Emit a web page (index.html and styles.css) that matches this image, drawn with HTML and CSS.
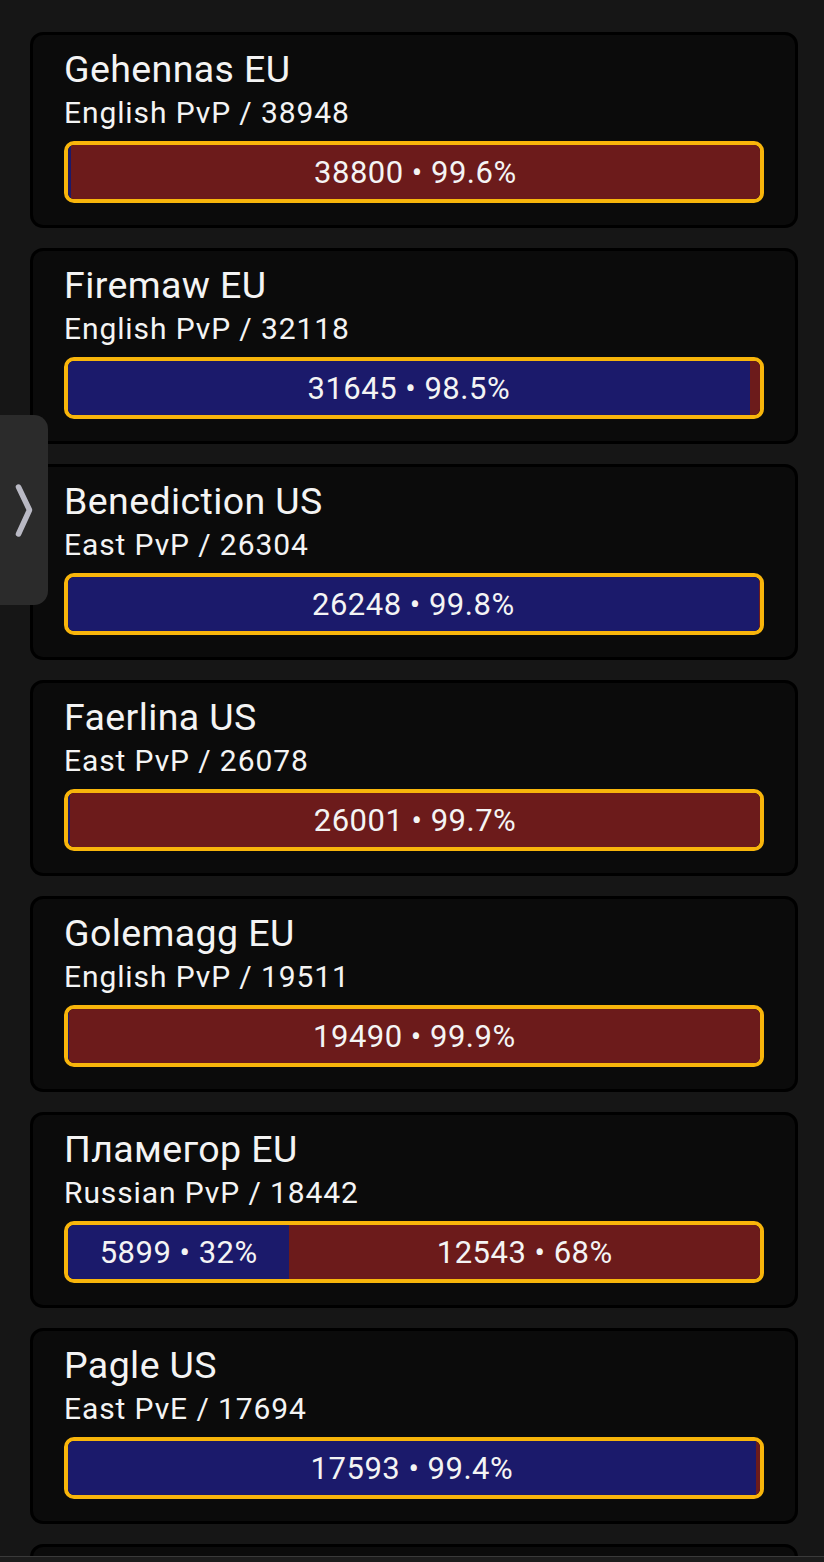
FILE: index.html
```html
<!DOCTYPE html>
<html lang="en">
<head>
<meta charset="utf-8">
<title>Realms</title>
<link rel="stylesheet" href="styles.css">
</head>
<body>
<main class="list">
  <section class="card">
    <div class="name">Gehennas EU</div>
    <div class="meta">English PvP / 38948</div>
    <div class="bar">
      <div class="seg ally" style="width:0.4%"></div>
      <div class="seg horde" style="width:99.6%"><span>38800 • 99.6%</span></div>
    </div>
  </section>
  <section class="card">
    <div class="name">Firemaw EU</div>
    <div class="meta">English PvP / 32118</div>
    <div class="bar">
      <div class="seg ally" style="width:98.5%"><span>31645 • 98.5%</span></div>
      <div class="seg horde" style="width:1.5%"></div>
    </div>
  </section>
  <section class="card">
    <div class="name">Benediction US</div>
    <div class="meta">East PvP / 26304</div>
    <div class="bar">
      <div class="seg ally" style="width:99.8%"><span>26248 • 99.8%</span></div>
      <div class="seg horde" style="width:0.2%"></div>
    </div>
  </section>
  <section class="card">
    <div class="name">Faerlina US</div>
    <div class="meta">East PvP / 26078</div>
    <div class="bar">
      <div class="seg ally" style="width:0.3%"></div>
      <div class="seg horde" style="width:99.7%"><span>26001 • 99.7%</span></div>
    </div>
  </section>
  <section class="card">
    <div class="name">Golemagg EU</div>
    <div class="meta">English PvP / 19511</div>
    <div class="bar">
      <div class="seg ally" style="width:0.1%"></div>
      <div class="seg horde" style="width:99.9%"><span>19490 • 99.9%</span></div>
    </div>
  </section>
  <section class="card">
    <div class="name">Пламегор EU</div>
    <div class="meta">Russian PvP / 18442</div>
    <div class="bar">
      <div class="seg ally" style="width:32%"><span>5899 • 32%</span></div>
      <div class="seg horde" style="width:68%"><span>12543 • 68%</span></div>
    </div>
  </section>
  <section class="card">
    <div class="name">Pagle US</div>
    <div class="meta">East PvE / 17694</div>
    <div class="bar">
      <div class="seg ally" style="width:99.4%"><span>17593 • 99.4%</span></div>
      <div class="seg horde" style="width:0.6%"></div>
    </div>
  </section>
  <section class="card card-partial"></section>
</main>
<button class="side-tab" aria-label="Open menu">
  <svg width="48" height="190" viewBox="0 0 48 190" aria-hidden="true">
    <polyline points="18.5,72 29.5,95 18.5,119" fill="none" stroke="#b9b9c4" stroke-width="5.5" stroke-linecap="round" stroke-linejoin="round"/>
  </svg>
</button>
<div class="bottom-edge"></div>
</body>
</html>
```

FILE: styles.css
```css
html, body {
  margin: 0;
  padding: 0;
  background: #161616;
}

body {
  font-family: Roboto, "Noto Sans", "Noto Sans CJK SC", sans-serif;
  color: #f4f4f4;
  overflow: hidden;
}

.list {
  display: flex;
  flex-direction: column;
  gap: 20px;
  padding: 32px 26px 40px 30px;
}

.card {
  background: #0b0b0b;
  border: 3px solid #000;
  border-radius: 13px;
  padding: 12px 31px 22px 31px;
  height: 196px;
  box-sizing: border-box;
}

.name {
  font-size: 37.5px;
  line-height: 44px;
  letter-spacing: 0.4px;
}

.meta {
  font-size: 30px;
  line-height: 34px;
  letter-spacing: 0.9px;
  margin-top: 5px;
}

.bar {
  margin-top: 11px;
  height: 62px;
  box-sizing: border-box;
  border: 4px solid #f8b50b;
  border-radius: 10px;
  display: flex;
  overflow: hidden;
}

.seg {
  height: 100%;
  display: flex;
  align-items: center;
  justify-content: center;
  overflow: hidden;
  white-space: nowrap;
  font-size: 31px;
  letter-spacing: 0.5px;
}

.ally {
  background: #1b1a6b;
}

.horde {
  background: #6c1b1b;
}

.side-tab {
  position: fixed;
  left: 0;
  top: 415px;
  width: 48px;
  height: 190px;
  padding: 0;
  border: none;
  background: #2b2b2b;
  border-radius: 0 14px 14px 0;
}

.side-tab svg {
  display: block;
}

.bottom-edge {
  position: fixed;
  left: 0;
  right: 0;
  bottom: 0;
  height: 5px;
  background: #1c1c1c;
  border-top: 1px solid #3a3a3a;
}
```
